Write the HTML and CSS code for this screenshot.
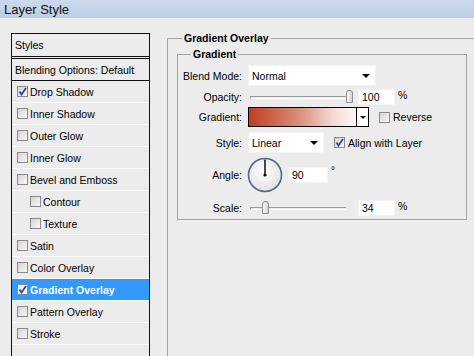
FILE: index.html
```html
<!DOCTYPE html>
<html>

<head>
  <meta charset="UTF-8">
  <title>Layer Style</title>
  <link rel="stylesheet" href="styles.css">
</head>

<body>
  <div class="titlebar">Layer Style</div>

  <div class="dialog">
    <ul class="styles-list">
      <li class="head title">Styles</li>
      <li class="head blending">Blending Options: Default</li>
      <li><span class="check on"><svg viewBox="0 0 9 9"><path d="M1.5 4.5 L3.5 7.5 L8 1" /></svg></span>Drop Shadow</li>
      <li><span class="check"></span>Inner Shadow</li>
      <li><span class="check"></span>Outer Glow</li>
      <li><span class="check"></span>Inner Glow</li>
      <li><span class="check"></span>Bevel and Emboss</li>
      <li class="sub"><span class="check"></span>Contour</li>
      <li class="sub"><span class="check"></span>Texture</li>
      <li><span class="check"></span>Satin</li>
      <li><span class="check"></span>Color Overlay</li>
      <li class="active"><span class="check on"><svg viewBox="0 0 9 9"><path d="M1.5 4.5 L3.5 7.5 L8 1" /></svg></span>Gradient Overlay</li>
      <li><span class="check"></span>Pattern Overlay</li>
      <li><span class="check"></span>Stroke</li>
      <li class="empty"></li>
    </ul>

    <fieldset class="overlay">
      <legend>Gradient Overlay</legend>

      <fieldset class="group">
        <legend>Gradient</legend>

        <div class="row row-blend">
          <label>Blend Mode:</label>
          <div class="select select-wide">Normal<span class="arrow"></span></div>
        </div>

        <div class="row row-opacity">
          <label>Opacity:</label>
          <div class="slider">
            <span class="track"></span>
            <span class="thumb" style="left: 98px"></span>
          </div>
          <div class="field">100</div>
          <span class="unit">%</span>
        </div>

        <div class="row row-gradient">
          <label>Gradient:</label>
          <div class="swatch">
            <span class="ramp"></span>
            <span class="swatch-arrow"><span class="arrow"></span></span>
          </div>
          <span class="check reverse"></span>
          <span>Reverse</span>
        </div>

        <div class="row row-style">
          <label>Style:</label>
          <div class="select select-short">Linear<span class="arrow"></span></div>
          <span class="check on align"><svg viewBox="0 0 9 9"><path d="M1.5 4.5 L3.5 7.5 L8 1" /></svg></span>
          <span>Align with Layer</span>
        </div>

        <div class="row row-angle">
          <label>Angle:</label>
          <svg class="dial" viewBox="0 0 36 36">
            <defs>
              <radialGradient id="dialFill" cx="0.45" cy="0.4" r="0.6">
                <stop offset="0" stop-color="#ffffff" />
                <stop offset="1" stop-color="#e2e2e2" />
              </radialGradient>
            </defs>
            <circle cx="18" cy="18" r="16.5" fill="url(#dialFill)" stroke="#52658f" stroke-width="1.6" />
            <line x1="18" y1="18" x2="18" y2="2.5" stroke="#000" stroke-width="1.4" />
            <circle cx="18" cy="18" r="1.6" fill="#000" />
          </svg>
          <div class="field field-angle">90</div>
          <span class="degree">°</span>
        </div>

        <div class="row row-scale">
          <label>Scale:</label>
          <div class="slider">
            <span class="track"></span>
            <span class="thumb" style="left: 14px"></span>
          </div>
          <div class="field">34</div>
          <span class="unit">%</span>
        </div>
      </fieldset>
    </fieldset>
  </div>
</body>

</html>
```

FILE: styles.css
```css
* {
  box-sizing: border-box;
}

body {
  margin: 0;
  width: 474px;
  height: 356px;
  overflow: hidden;
  background-color: #ececec;
  font: 10.5px "Liberation Sans", Arial, sans-serif;
  color: #000;
}

.titlebar {
  height: 18px;
  padding: 2px 0 0 4px;
  font-size: 13px;
  line-height: 15px;
  color: #111;
  background: linear-gradient(#cddaec, #bccee6);
}

.dialog {
  display: flex;
  align-items: flex-start;
}

/* left list */
.styles-list {
  list-style: none;
  margin: 15px 0 0 11px;
  padding: 0;
  width: 139px;
  height: 340px;
  border: 1px solid #111;
  border-bottom: none;
}

.styles-list li {
  display: flex;
  align-items: center;
  gap: 2px;
  height: 22px;
  padding-left: 5px;
  border-bottom: 1px solid #fbfbfb;
  white-space: nowrap;
}

.styles-list .head {
  padding-left: 3px;
}

.styles-list .title {
  height: 25px;
  border-bottom: 3px double #111;
}

.styles-list .blending {
  border-bottom: 1px solid #111;
}

.styles-list .sub {
  padding-left: 18px;
}

.styles-list .active {
  background-color: #3399ff;
  color: #fff;
  font-weight: bold;
}

.styles-list .empty {
  border-bottom: none;
}

.check {
  display: inline-block;
  flex: none;
  width: 11px;
  height: 11px;
  border: 1px solid #8a8a8a;
  background: linear-gradient(135deg, #d4d4d4, #f8f8f8);
}

.check svg {
  display: block;
  width: 9px;
  height: 9px;
}

.check path {
  fill: none;
  stroke: #2b46a5;
  stroke-width: 1.8;
}

.active .check {
  background: linear-gradient(135deg, #e4e4e4, #fff);
}

/* right side */
.overlay {
  flex: 1;
  margin: 14px 0 0 17px;
  padding: 0;
  height: 330px;
  border: none;
  border-top: 1px solid #a3a3a3;
  border-left: 1px solid #a3a3a3;
  min-width: 0;
}

.overlay legend,
.group legend {
  padding: 0 2px;
  font-weight: bold;
  line-height: 13px;
}

.overlay > legend {
  margin-left: 14px;
}

.group {
  margin: 3px 7px 0 9px;
  padding: 4px 0 3px;
  border: 1px solid #a3a3a3;
}

.group > legend {
  margin-left: 13px;
}

.row {
  display: flex;
  align-items: center;
}

.row label {
  width: 64px;
  margin-right: 6px;
  text-align: right;
  flex: none;
}

.row-opacity {
  margin-top: 3px;
}

.row-gradient {
  margin-top: 2px;
}

.row-style {
  margin-top: 5px;
}

.row-angle {
  margin-top: 4px;
}

.row-scale {
  margin-top: 7px;
}

.select {
  display: flex;
  align-items: center;
  justify-content: space-between;
  height: 21px;
  padding: 0 5px 0 3px;
  background-color: #fff;
  border: 1px solid #f3f3f3;
}

.select-wide {
  width: 128px;
}

.select-short {
  width: 76px;
}

.arrow {
  width: 0;
  height: 0;
  border-left: 4px solid transparent;
  border-right: 4px solid transparent;
  border-top: 4px solid #000;
}

.slider {
  position: relative;
  display: flex;
  align-items: center;
  width: 105px;
  height: 16px;
  margin-right: 5px;
  padding-left: 2px;
}

.track {
  display: block;
  width: 96px;
  height: 3px;
  border-top: 1px solid #9a9a9a;
  border-left: 1px solid #9a9a9a;
  border-bottom: 1px solid #fff;
}

.thumb {
  position: absolute;
  top: 1px;
  width: 7px;
  height: 13px;
  border: 1px solid #8c8c8c;
  border-radius: 3px 3px 1px 1px;
  background: linear-gradient(90deg, #fff, #d0d0d0);
}

.field {
  width: 37px;
  height: 16px;
  padding: 1px 0 0 3px;
  background-color: #fff;
  border: 1px solid #f3f3f3;
}

.unit {
  margin-left: 3px;
  align-self: flex-start;
}

.swatch {
  display: flex;
  width: 121px;
  height: 20px;
  border: 1px solid #000;
}

.ramp {
  flex: 1;
  background: linear-gradient(90deg, #be3f22, #d98a75 45%, #f3d9d1 78%, #fdf9f8);
}

.swatch-arrow {
  display: flex;
  align-items: center;
  justify-content: center;
  width: 12px;
  border-left: 1px solid #000;
  background-color: #fff;
}

.swatch-arrow .arrow {
  border-left-width: 3px;
  border-right-width: 3px;
  border-top-width: 3px;
}

.reverse {
  margin: 0 3px 0 10px;
  width: 11px;
  height: 11px;
}

.align {
  margin: 0 3px 0 10px;
}

.dial {
  width: 36px;
  height: 36px;
  margin-left: -1px;
  margin-right: 5px;
}

.field-angle {
  width: 40px;
}

.degree {
  align-self: flex-start;
  margin: 8px 0 0 3px;
  font-size: 10px;
}
```
